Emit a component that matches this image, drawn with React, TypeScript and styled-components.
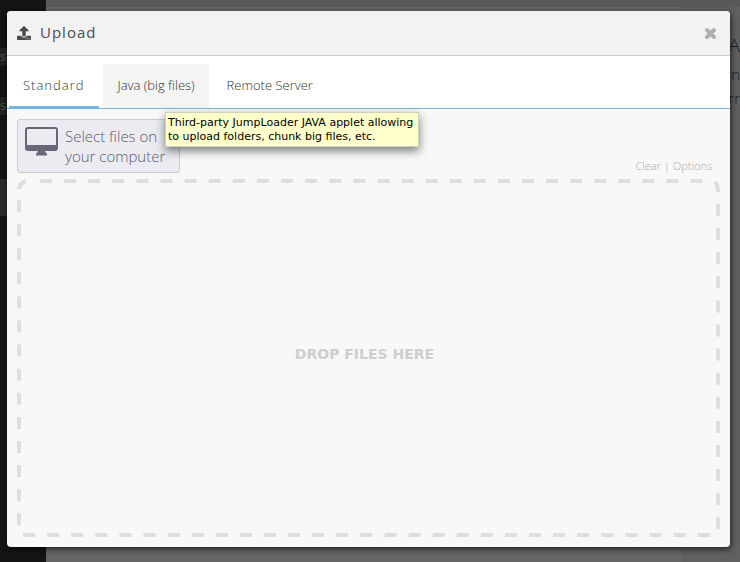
import React from 'react';
import styled, { createGlobalStyle, css } from 'styled-components';
import { FaUpload } from 'react-icons/fa';

const Global = createGlobalStyle`
  * { box-sizing: border-box; }
  html, body, #root { height: 100%; }
  body { margin: 0; font-family: "Open Sans", sans-serif; color: #4c4c4c; overflow: hidden; }
  button { font: inherit; color: inherit; border: 0; background: none; padding: 0; cursor: pointer; }
`;

const Page = styled.div`
  position: relative;
  height: 100%;
  min-height: 100vh;
`;

const Backdrop = styled.div`
  position: absolute;
  inset: 0;
  display: grid;
  grid-template-columns: 46px 1fr 59px;
  background: #656565;
`;

const Sidebar = styled.nav`
  display: flex;
  flex-direction: column;
  padding-top: 48px;
  background: #141414;
`;

const SideItem = styled.span<{ $height: number; $gap: number; $tone: string }>`
  height: ${(p) => p.$height}px;
  margin-bottom: ${(p) => p.$gap}px;
  background: ${(p) => p.$tone};
  color: #555;
  font-size: 12px;
  line-height: ${(p) => p.$height}px;
`;

const Canvas = styled.div`
  border-top: 7px solid #585858;
`;

const Details = styled.aside`
  display: flex;
  flex-direction: column;
  align-items: flex-end;
  padding-top: 26px;
  border-top: 7px solid #585858;
  background: #606060;
  color: #1c1c1c;
  font-size: 15px;
  font-weight: 300;
  line-height: 24px;
  white-space: nowrap;
`;

const DetailsTitle = styled.span`
  margin-bottom: 5px;
  font-size: 19px;
`;

const Dialog = styled.section`
  position: absolute;
  inset: 11px 10px 15px 7px;
  display: flex;
  flex-direction: column;
  border-radius: 4px;
  background: #f8f8f8;
  box-shadow: 1px 2px 6px rgba(0, 0, 0, 0.7);
`;

const Header = styled.header`
  display: flex;
  align-items: center;
  gap: 9px;
  height: 45px;
  padding: 0 13px 0 10px;
  border-bottom: 1px solid #ccc;
  border-radius: 4px 4px 0 0;
  background: #f2f2f2;
`;

const Title = styled.h1`
  flex: 1;
  margin: 0;
  padding-bottom: 2px;
  font-size: 15px;
  font-weight: 400;
  letter-spacing: 1px;
`;

const CloseButton = styled.button`
  display: flex;
  color: #b0b0b0;
`;

const Tabs = styled.div`
  display: flex;
  gap: 4px;
  height: 53px;
  padding: 8px 2px 0;
  border-bottom: 1px solid #74b5de;
  background: #fff;
`;

const Tab = styled.button<{ $active?: boolean; $hover?: boolean }>`
  padding: 0 14px 2px;
  border-radius: 4px 4px 0 0;
  color: #333;
  font-size: 13px;
  font-weight: 300;
  ${(p) => p.$hover && css`background: #f4f4f4;`}
  ${(p) => p.$active && css`
    border-bottom: 2px solid #74b5de;
    border-radius: 0;
    padding: 0 15px 0 14px;
    letter-spacing: 1px;
  `}
`;

const Body = styled.div`
  flex: 1;
  display: flex;
  flex-direction: column;
  padding: 10px;
`;

const Toolbar = styled.div`
  display: flex;
  justify-content: space-between;
  align-items: flex-end;
  margin-bottom: 6px;
`;

const SelectButton = styled.button`
  display: flex;
  align-items: flex-start;
  gap: 6px;
  height: 54px;
  padding: 6px 14px 0 7px;
  border: 1px solid #ccc;
  border-radius: 3px;
  background: #ebecf1;
  color: #5c5a70;
  font-size: 15px;
  font-weight: 300;
  line-height: 20px;
  text-align: left;
`;

const Links = styled.div`
  display: flex;
  gap: 3px;
  padding-right: 8px;
  color: #a8a8a8;
  font-size: 11px;
  font-weight: 300;
  line-height: 14px;
`;

const TextLink = styled.a`
  color: inherit;
  text-decoration: none;
`;

const DropZone = styled.div`
  position: relative;
  flex: 1;
  display: flex;
  align-items: center;
  justify-content: center;
  padding: 0 8px 8px 0;
  color: #cecece;
  font-family: "DejaVu Sans", sans-serif;
  font-size: 14px;
  font-weight: 700;
`;

const Outline = styled.svg`
  position: absolute;
  inset: 0;
  width: 100%;
  height: 100%;
  overflow: visible;
  pointer-events: none;
`;

const Tooltip = styled.div`
  position: absolute;
  top: 112px;
  left: 165px;
  padding: 3px 5px 2px 2px;
  border: 1px solid #d0d0c0;
  background: #ffffcb;
  box-shadow: 0 4px 9px rgba(0, 0, 0, 0.5);
  color: #000;
  font-family: "DejaVu Sans", sans-serif;
  font-size: 11px;
  line-height: 14px;
  white-space: nowrap;
`;

const CloseIcon = () => (
  <svg width="13" height="13" viewBox="0 0 13 13" aria-hidden="true">
    <path d="M3 3 10 10M10 3 3 10" stroke="currentColor" strokeWidth="4" strokeLinecap="round" />
  </svg>
);

const MonitorIcon = () => (
  <svg width="34" height="30" viewBox="0 0 34 30" aria-hidden="true">
    <path
      fill="#686678"
      fillRule="evenodd"
      d="M3 1h27a3 3 0 0 1 3 3v18a3 3 0 0 1-3 3H20q0 1.500 2 2.500v2H11v-2q2-1 2-2.500H3a3 3 0 0 1-3-3V4a3 3 0 0 1 3-3ZM3 3a1 1 0 0 0-1 1v15h29V4a1 1 0 0 0-1-1Z"
    />
  </svg>
);

const DashedOutline = () => (
  <Outline aria-hidden="true" fill="none" stroke="#dedede" strokeWidth="4">
    <g strokeDasharray="12 12.1">
      <line x1="23" y1="2" x2="99%" y2="2" />
      <line x1="6" y1="100%" x2="99%" y2="100%" transform="translate(0 -2)" />
      <line x1="2" y1="21" x2="2" y2="98%" />
      <line x1="100%" y1="25" x2="100%" y2="98%" transform="translate(-2 0)" />
    </g>
    <path d="M2 10Q3 4 9 2" />
    <svg x="100%" y="0" overflow="visible">
      <path d="M-5 3Q-2 6-2 13" />
    </svg>
  </Outline>
);

export default function App() {
  return (
    <Page>
      <Global />
      <Backdrop>
        <Sidebar>
          <SideItem $height={18} $gap={31} $tone="#222">sl</SideItem>
          <SideItem $height={18} $gap={64} $tone="#222">sl</SideItem>
          <SideItem $height={37} $gap={0} $tone="#2b2b2b" />
        </Sidebar>
        <Canvas />
        <Details>
          <DetailsTitle>A</DetailsTitle>
          <span>rn</span>
          <span>err</span>
        </Details>
      </Backdrop>
      <Dialog role="dialog" aria-labelledby="dialog-title">
        <Header>
          <FaUpload size={14} aria-hidden="true" />
          <Title id="dialog-title">Upload</Title>
          <CloseButton aria-label="Close"><CloseIcon /></CloseButton>
        </Header>
        <Tabs role="tablist">
          <Tab role="tab" aria-selected="true" $active>Standard</Tab>
          <Tab role="tab" aria-selected="false" aria-describedby="java-tip" $hover>Java (big files)</Tab>
          <Tab role="tab" aria-selected="false">Remote Server</Tab>
        </Tabs>
        <Body>
          <Toolbar>
            <SelectButton>
              <MonitorIcon />
              <span>Select files on<br />your computer</span>
            </SelectButton>
            <Links>
              <TextLink href="#clear">Clear</TextLink>
              <span>|</span>
              <TextLink href="#options">Options</TextLink>
            </Links>
          </Toolbar>
          <DropZone>
            <DashedOutline />
            DROP FILES HERE
          </DropZone>
        </Body>
      </Dialog>
      <Tooltip role="tooltip" id="java-tip">
        Third-party JumpLoader JAVA applet allowing<br />to upload folders, chunk big files, etc.
      </Tooltip>
    </Page>
  );
}
